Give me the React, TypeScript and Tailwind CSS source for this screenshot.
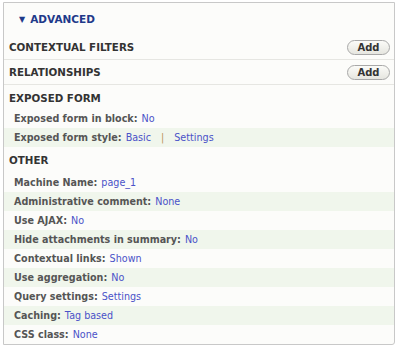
import type { ReactNode } from "react";

const FONT = { fontFamily: '"DejaVu Sans", Verdana, sans-serif' };

function AddButton() {
  return (
    <button
      type="button"
      className="h-[15px] w-[43px] rounded-full border border-[#a8a8a8] bg-gradient-to-b from-[#fbfbf8] to-[#e6e6e0] text-[10px] font-bold leading-none text-[#333]"
    >
      Add
    </button>
  );
}

function SectionHeader({ title, action }: { title: string; action?: boolean }) {
  return (
    <div className="flex h-full items-center justify-between pl-[5px] pr-[4px]">
      <span className="text-[10.3px] font-bold uppercase text-[#333]">{title}</span>
      {action && <AddButton />}
    </div>
  );
}

function Row({ label, striped, children }: { label: string; striped?: boolean; children: ReactNode }) {
  return (
    <div
      className={`flex h-[19px] items-center pl-[10px] pt-[1px] text-[9.6px] ${striped ? "bg-[#f0f6ec]" : ""}`}
    >
      <span className="font-bold text-[#555]">{label}</span>
      <span className="ml-[4px] text-[#4a52c8]">{children}</span>
    </div>
  );
}

export default function App() {
  return (
    <div className="h-[349px] w-[396px] bg-white pl-[3px] pt-[2px]" style={FONT}>
      <div className="w-[392px] rounded-br-[3px] border border-[#c8c8c8] bg-[#fcfcfa]">
        {/* legend */}
        <div className="flex h-[31px] items-center pl-[15px] pt-[2px] text-[10.5px] font-bold text-[#1f3a8a]">
          <span className="mr-[5px] text-[8px]">▼</span>
          ADVANCED
        </div>

        <div className="h-[26px] border-b border-[#e6e6e2] pt-[2px]">
          <SectionHeader title="Contextual filters" action />
        </div>
        <div className="h-[25px] border-b border-[#e6e6e2] pt-[1px]">
          <SectionHeader title="Relationships" action />
        </div>

        <div className="h-[24px] pt-[3px]">
          <SectionHeader title="Exposed form" />
        </div>
        <Row label="Exposed form in block:">No</Row>
        <Row label="Exposed form style:" striped>
          Basic
          <span className="mx-[10px] text-[#b8955a]">|</span>
          Settings
        </Row>

        <div className="h-[26px] pt-[2px]">
          <SectionHeader title="Other" />
        </div>
        <Row label="Machine Name:">page_1</Row>
        <Row label="Administrative comment:" striped>None</Row>
        <Row label="Use AJAX:">No</Row>
        <Row label="Hide attachments in summary:" striped>No</Row>
        <Row label="Contextual links:">Shown</Row>
        <Row label="Use aggregation:" striped>No</Row>
        <Row label="Query settings:">Settings</Row>
        <Row label="Caching:" striped>Tag based</Row>
        <Row label="CSS class:">None</Row>
      </div>
    </div>
  );
}
